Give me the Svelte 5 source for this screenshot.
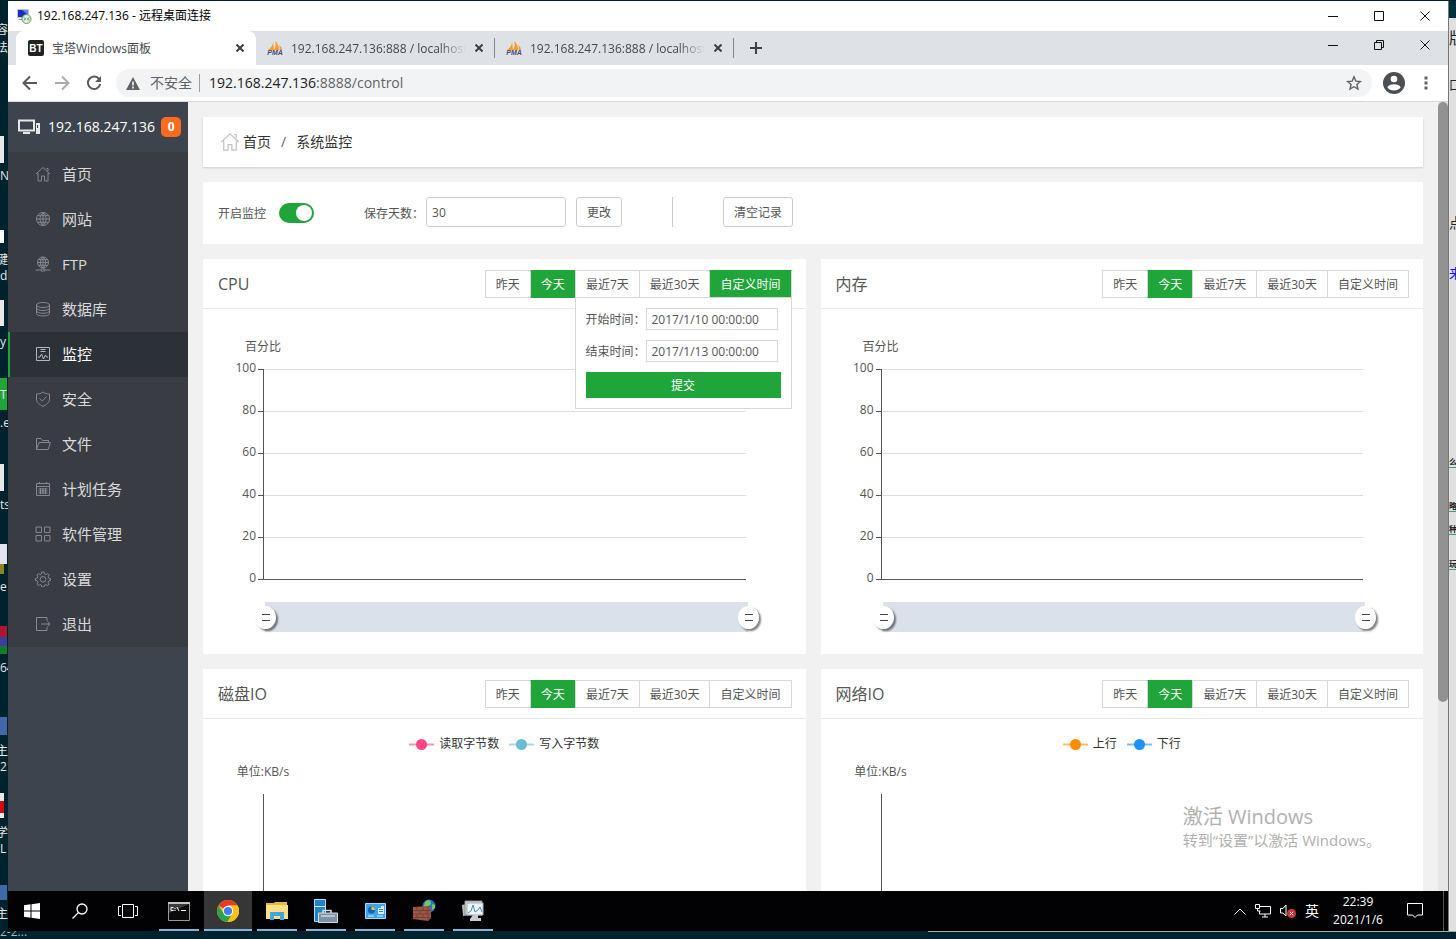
<script>
  const menu = [
    { name: '首页', icon: 'M1 8 8 1.500 15 8M3 7v8h3.500V10h3v5H13V7M11.500 2.500H13V5' },
    {
      name: '网站',
      icon: 'M8 1.500a6.500 6.500 0 1 0 0 13a6.500 6.500 0 1 0 0-13M8 1.500v13M1.500 8h13M8 1.500c-4 3.500-4 9.500 0 13M8 1.500c4 3.500 4 9.500 0 13M2.500 4.700h11M2.500 11.300h11',
    },
    {
      name: 'FTP',
      icon: 'M8 1a5.500 5.500 0 1 0 0 11a5.500 5.500 0 1 0 0-11M8 1v11M2.500 6.500h11M8 1c-3.500 3-3.500 8 0 11M8 1c3.500 3 3.500 8 0 11M3.500 3.700h9M3.500 9.300h9M.5 14h5M10.500 14h5M6 13h4v2H6z',
    },
    {
      name: '数据库',
      icon: 'M1.500 4c0-3.300 13-3.300 13 0s-13 3.300-13 0v8.500c0 3.300 13 3.300 13 0V4M1.500 7c0 3.300 13 3.300 13 0M1.500 9.800c0 3.300 13 3.300 13 0',
    },
    { name: '监控', icon: 'M1.500 1.500h13v13h-13zM3 11h2l1.500-3 2 5 2-4 1 2H13M5.500 3.500h5M5.500 5.500h5' },
    { name: '安全', icon: 'M8 1c2 1.500 4 2 6.500 2v5c0 3.500-3 5.800-6.500 7.300C4.500 13.800 1.500 11.500 1.500 8V3C4 3 6 2.500 8 1M4.800 7.500l2.500 2.700 4.200-4.700' },
    { name: '文件', icon: 'M1.500 13.500v-11h4.500l1.500 2h6v2M1.500 13.500l2.500-7h11.300l-2 7z' },
    {
      name: '计划任务',
      icon: 'M1.500 2.500h13v12h-13zM1.500 5.500h13M4.500 1V3M11.500 1V3M3.500 8h9M3.500 10h9M3.500 12h9M5.500 7v6M8 7v6M10.500 7v6',
    },
    { name: '软件管理', icon: 'M1 1h5.500v5.500H1zM9.500 1H15v5.500H9.500zM1 9.500h5.500V15H1zM9.500 9.500H15V15H9.500z' },
    {
      name: '设置',
      icon: 'M6.800 1h2.400l.4 2 1.300.6L12.600 2.500l1.500 1.600-1 1.700.5 1.300 1.900.4v2l-1.900.5-.5 1.300 1 1.700-1.500 1.600-1.700-1.100-1.300.6-.4 2H6.800l-.4-2-1.300-.6-1.700 1.100L1.900 13l1-1.700L2.400 10l-1.900-.5v-2l1.900-.4.5-1.300-1-1.700 1.500-1.600 1.700 1.100L6.400 3zM8 5.500a2.800 2.800 0 1 0 0 5.600a2.800 2.800 0 1 0 0-5.600',
    },
    { name: '退出', icon: 'M12 5V1.500H1.500v13H12V11M6 8h9M12.500 5.500 15 8l-2.500 2.500' },
  ];

  const ranges = ['昨天', '今天', '最近7天', '最近30天', '自定义时间'];
  const ticks = [100, 80, 60, 40, 20, 0];

  const panels = [
    { title: 'CPU', unit: '百分比', legend: [] },
    { title: '内存', unit: '百分比', legend: [] },
    {
      title: '磁盘IO',
      unit: '单位:KB/s',
      legend: [
        { name: '读取字节数', color: '#ff4683' },
        { name: '写入字节数', color: '#6abcd0' },
      ],
    },
    {
      title: '网络IO',
      unit: '单位:KB/s',
      legend: [
        { name: '上行', color: '#ff8c00' },
        { name: '下行', color: '#1e90ff' },
      ],
    },
  ];

  // Labels on the desktop behind the window, by their top edge.
  const desktopLeft = [
    { top: 20, text: '容' },
    { top: 38, text: '法' },
    { top: 166, text: 'N', latin: true },
    { top: 250, text: '键' },
    { top: 266, text: 'dp', latin: true },
    { top: 332, text: 'y', latin: true },
    { top: 385, text: 'T', latin: true },
    { top: 413, text: '.e', latin: true },
    { top: 495, text: 'ts', latin: true },
    { top: 577, text: 'e', latin: true },
    { top: 658, text: '64', latin: true },
    { top: 741, text: '主' },
    { top: 757, text: '2', latin: true },
    { top: 823, text: '学' },
    { top: 839, text: 'L', latin: true },
    { top: 904, text: '主' },
  ];
  const desktopFiles = [
    { top: 135, height: 27, color: '#e8e8e8' },
    { top: 229, height: 13, color: '#ffffff' },
    { top: 299, height: 26, color: '#e8e8e8' },
    { top: 377, height: 32, color: '#1fa53a', wide: true },
    { top: 463, height: 27, color: '#e8e8e8' },
    { top: 543, height: 20, color: '#e4e4ee', wide: true },
    { top: 563, height: 10, color: '#8d8420' },
    { top: 625, height: 11, color: '#b01432', wide: true },
    { top: 636, height: 9, color: '#3a3f9c', wide: true },
    { top: 645, height: 8, color: '#157a2c', wide: true },
    { top: 716, height: 18, color: '#4169a8', wide: true },
    { top: 792, height: 8, color: '#e8e8e8' },
    { top: 800, height: 12, color: '#d20a18' },
    { top: 812, height: 5, color: '#e8e8e8' },
    { top: 884, height: 15, color: '#4169a8', wide: true },
  ];
  const desktopRight = [
    { top: 28, text: '版', size: 16 },
    { top: 76, text: '口', size: 12 },
    { top: 213, text: '点', size: 14 },
    { top: 263, text: '来', size: 13, color: '#1414e0' },
    { top: 456, text: '么', size: 8, link: true },
    { top: 500, text: '略', size: 8, link: true },
    { top: 523, text: '种', size: 8, link: true },
    { top: 558, text: '玩', size: 8, link: true },
  ];

  let current = $state('监控');
  let selected = $state(panels.map(() => '今天'));
  let customOpen = $state(0);
  let monitoring = $state(true);
  let days = $state('30');
  let startTime = $state('2017/1/10 00:00:00');
  let endTime = $state('2017/1/13 00:00:00');

  function choose(index, range) {
    if (range === '自定义时间') {
      customOpen = customOpen === index ? -1 : index;
      return;
    }
    selected[index] = range;
  }
</script>

{#snippet windowButtons(restore)}
  <div class="window-buttons">
    <button type="button" aria-label="最小化">
      <svg width="11" height="11"><path d="M0 5.500h10" /></svg>
    </button>
    <button type="button" aria-label="最大化">
      <svg width="11" height="11">
        {#if restore}
          <path d="M.5 2.500h7v7h-7zM2.500 2.500v-2h7v7h-2" />
        {:else}
          <path d="M.5.5h9v9h-9z" />
        {/if}
      </svg>
    </button>
    <button type="button" aria-label="关闭">
      <svg width="11" height="11"><path d="M.5.5l9 9M9.500.5l-9 9" /></svg>
    </button>
  </div>
{/snippet}

{#snippet closeTab()}
  <button class="tab__close" type="button" aria-label="关闭标签页">
    <svg width="8" height="8" viewBox="0 0 8 8"><path d="M.5.5l7 7M7.500.5l-7 7" /></svg>
  </button>
{/snippet}

<div class="desktop">
  <div class="strip strip--left">
    {#each desktopFiles as file}
      <i
        class:is-wide={file.wide}
        style:top={`${file.top}px`}
        style:height={`${file.height}px`}
        style:background={file.color}></i>
    {/each}
    {#each desktopLeft as label}
      <span class:is-latin={label.latin} style:top={`${label.top}px`}>{label.text}</span>
    {/each}
  </div>

  <div class="window">
    <header class="titlebar">
      <svg class="titlebar__icon" width="16" height="16" viewBox="0 0 16 16">
        <path d="M1 1h12v9H1z" fill="#c3c8cc" />
        <path d="M2 2h10v7H2z" fill="#1730c4" />
        <path d="M6 2h6v5z" fill="#5d83e8" />
        <path d="M3 11h6v1H2z" fill="#8d9599" />
        <circle cx="10.500" cy="11" r="4.500" fill="#e4eee0" stroke="#6e9a62" />
        <path d="M8 9.500 9.500 11 8 12.500M13 9.500 11.500 11l1.500 1.500" fill="none" stroke="#287a28" />
      </svg>
      <span>192.168.247.136 - 远程桌面连接</span>
      {@render windowButtons(false)}
    </header>

    <div class="tabs">
      <div class="tab tab--active">
        <svg width="16" height="16" viewBox="0 0 16 16">
          <rect width="16" height="16" rx="2" fill="#222" />
          <text x="8" y="12" text-anchor="middle" class="bt">BT</text>
        </svg>
        <span class="tab__title">宝塔Windows面板</span>
        {@render closeTab()}
      </div>
      {#each [1, 2] as tab (tab)}
        <div class="tab">
          <svg width="16" height="16" viewBox="0 0 16 16">
            <path d="M1 10C4 8 6 5 6 2l1 8zM7 10c2-3 2-6 1-9 3 2 4 6 4 9zM12.500 10c.5-2 0-4-.5-5 2 1 3 3 3 5z" fill="#f59a2d" />
            <text x="8" y="15" text-anchor="middle" class="pma">PMA</text>
          </svg>
          <span class="tab__title tab__title--fade">192.168.247.136:888 / localhost</span>
          {@render closeTab()}
        </div>
      {/each}
      <button class="tabs__new" type="button" aria-label="新标签页">
        <svg width="12" height="12"><path d="M6 0v12M0 6h12" /></svg>
      </button>
      {@render windowButtons(true)}
    </div>

    <div class="toolbar">
      <button type="button" aria-label="后退">
        <svg width="16" height="16" viewBox="0 0 16 16"><path d="M15 8H2M8 1.500 1.500 8 8 14.500" /></svg>
      </button>
      <button class="is-disabled" type="button" aria-label="前进">
        <svg width="16" height="16" viewBox="0 0 16 16"><path d="M1 8h13M8 1.500 14.500 8 8 14.500" /></svg>
      </button>
      <button type="button" aria-label="重新加载">
        <svg width="16" height="16" viewBox="0 0 16 16">
          <path d="M13.200 4.200A6.200 6.200 0 1 0 14.200 9" />
          <path d="M15 1v6H9z" fill="#555a5f" stroke="none" />
        </svg>
      </button>
      <div class="omnibox">
        <svg width="14" height="13" viewBox="0 0 14 13">
          <path d="M7 0l7 13H0z" fill="#5f6368" />
          <path d="M7 4.500v4M7 9.500v2" stroke="#fff" stroke-width="1.500" />
        </svg>
        <span class="omnibox__state">不安全</span>
        <span class="omnibox__url"><b>192.168.247.136</b>:8888/control</span>
        <svg width="16" height="16" viewBox="0 0 16 16">
          <path d="M8 1.800l1.800 4.300 4.600.4-3.500 3 1.100 4.600L8 11.700l-4 2.400 1.100-4.600-3.500-3 4.600-.4z" fill="none" stroke="#5f6368" stroke-width="1.400" />
        </svg>
      </div>
      <button class="avatar" type="button" aria-label="用户">
        <svg width="22" height="22" viewBox="0 0 22 22">
          <circle cx="11" cy="11" r="11" fill="#4c4f53" />
          <circle cx="11" cy="7" r="3.300" fill="#fff" />
          <path d="M4.300 15.300c1.500-4 11.900-4 13.400 0-3 4.400-10.400 4.400-13.400 0" fill="#fff" />
        </svg>
      </button>
      <button type="button" aria-label="菜单">
        <svg width="4" height="14" viewBox="0 0 4 14">
          <path d="M.5.5h3v3h-3zM.5 5.500h3v3h-3zM.5 10.500h3v3h-3z" fill="#5f6368" stroke="none" />
        </svg>
      </button>
    </div>

    <div class="page">
      <nav class="sidebar">
        <div class="sidebar__host">
          <svg width="24" height="18" viewBox="0 0 24 18">
            <path d="M2 2.500h15v10H2z" fill="none" stroke="#e8e8e8" stroke-width="2" />
            <path d="M6 14h7v2H6zM19 5h4v11h-4z" fill="#e8e8e8" />
            <path d="M20.500 7v3" stroke="#3d444d" />
          </svg>
          <span>192.168.247.136</span>
          <em>0</em>
        </div>
        {#each menu as item (item.name)}
          <a
            href={`#${item.name}`}
            class:is-active={current === item.name}
            onclick={() => (current = item.name)}>
            <svg width="16" height="16" viewBox="0 0 16 16"><path d={item.icon} /></svg>
            {item.name}
          </a>
        {/each}
      </nav>

      <main>
        <div class="card breadcrumb">
          <svg width="20" height="20" viewBox="0 0 16 16">
            <path d="M1 8 8 1.500 15 8M3 7v7.500h3.500V10h3v4.500H13V7M11.500 2H13v3" />
          </svg>
          <a href="#home">首页</a>
          <span class="breadcrumb__slash">/</span>
          <span>系统监控</span>
        </div>

        <div class="card settings">
          <label for="monitor">开启监控</label>
          <input id="monitor" class="switch" type="checkbox" bind:checked={monitoring} />
          <label class="settings__days" for="days">保存天数：</label>
          <input id="days" class="settings__input" type="text" bind:value={days} />
          <button type="button">更改</button>
          <span class="settings__divider"></span>
          <button type="button">清空记录</button>
        </div>

        <div class="panels">
          {#each panels as panel, index (panel.title)}
            <section class="card panel">
              <div class="panel__header">
                <h2>{panel.title}</h2>
                <div class="ranges">
                  {#each ranges as range}
                    <button
                      type="button"
                      class:is-on={selected[index] === range || (range === '自定义时间' && customOpen === index)}
                      onclick={() => choose(index, range)}>
                      {range}
                    </button>
                  {/each}
                  {#if customOpen === index}
                    <div class="custom">
                      <div class="custom__row">
                        <label for="start">开始时间：</label>
                        <input id="start" type="text" bind:value={startTime} />
                      </div>
                      <div class="custom__row">
                        <label for="end">结束时间：</label>
                        <input id="end" type="text" bind:value={endTime} />
                      </div>
                      <button type="button" onclick={() => (customOpen = -1)}>提交</button>
                    </div>
                  {/if}
                </div>
              </div>

              {#if panel.legend.length}
                <div class="legend">
                  {#each panel.legend as series}
                    <span class="legend__item">
                      <svg width="25" height="14" style:color={series.color}>
                        <path d="M0 7.500h25" stroke="currentColor" stroke-width="2" opacity="0.6" />
                        <circle cx="12.500" cy="7.500" r="5.500" fill="currentColor" />
                      </svg>
                      {series.name}
                    </span>
                  {/each}
                </div>
                <div class="unit">{panel.unit}</div>
                <div class="empty-axis"></div>
              {:else}
                <div class="unit unit--top">{panel.unit}</div>
                <div class="chart">
                  {#each ticks as tick}
                    <div class="chart__row" class:chart__row--zero={tick === 0}>
                      <span>{tick}</span>
                      <i></i>
                    </div>
                  {/each}
                </div>
                <div class="zoom">
                  <input type="range" min="0" max="100" value="0" aria-label="起点" />
                  <input type="range" min="0" max="100" value="100" aria-label="终点" />
                </div>
              {/if}
            </section>
          {/each}
        </div>
      </main>

      <div class="scrollbar"><div></div></div>

      <div class="watermark">
        <p>激活 Windows</p>
        <small>转到“设置”以激活 Windows。</small>
      </div>
    </div>

    <footer class="taskbar">
      <button type="button" aria-label="开始">
        <svg width="16" height="16" viewBox="0 0 16 16">
          <path d="M0 2.300 6.500 1.300V7.500H0zM7.500 1.200 16 0v7.500H7.500zM0 8.500h6.500v6.200L0 13.700zM7.500 8.500H16V16l-8.500-1.200z" fill="#fff" />
        </svg>
      </button>
      <button type="button" aria-label="搜索">
        <svg width="16" height="16" viewBox="0 0 16 16" fill="none" stroke="#fff" stroke-width="1.300">
          <circle cx="10" cy="6" r="5" /><path d="M6.500 9.500.5 15.500" />
        </svg>
      </button>
      <button type="button" aria-label="任务视图">
        <svg width="20" height="14" viewBox="0 0 20 14" fill="none" stroke="#fff">
          <path d="M4.500.5h11v13h-11zM3 2.500H.5v9H3M17 2.500h2.500v9H17" />
        </svg>
      </button>
      <div class="taskbar__apps">
        <button type="button" aria-label="命令提示符">
          <svg width="22" height="19" viewBox="0 0 22 19">
            <path d="M.5.5h21v18H.5z" fill="#0a0a0a" stroke="#999" />
            <path d="M0 0h22v2H0z" fill="#c4c4c4" />
            <path d="M1 2h20L1 11z" fill="#3c3c3c" />
            <path d="M5.500 5.500H3v3h2.500M7 6v1M7 8v1M9 5l2 4M13 8.500h5" fill="none" stroke="#fff" />
          </svg>
        </button>
        <button class="is-current" type="button" aria-label="Chrome">
          <svg width="22" height="22" viewBox="0 0 22 22">
            <circle cx="11" cy="11" r="11" fill="#fbc116" />
            <path d="M11 11 1.500 5.500A11 11 0 0 1 20.500 5.500H11z" fill="#e33b2e" />
            <path d="M1.500 5.500A11 11 0 0 0 10.500 22l5-8.500L11 11l-4.500 2.500z" fill="#2ba24c" />
            <path d="M11 5.500h9.500A11 11 0 0 1 10.500 22l5-8.500z" fill="#fbc116" />
            <circle cx="11" cy="11" r="5.200" fill="#fff" />
            <circle cx="11" cy="11" r="4.100" fill="#3f7fec" />
          </svg>
        </button>
        <button type="button" aria-label="文件资源管理器">
          <svg width="22" height="18" viewBox="0 0 22 18">
            <path d="M0 1h8l1-1h12v4H0z" fill="#e8b844" />
            <path d="M0 3h22v14H0z" fill="#fbdf86" />
            <path d="M4 18v-8h14v8h-4v-4H8v4z" fill="#3fa7dc" />
          </svg>
        </button>
        <button type="button" aria-label="服务器管理器">
          <svg width="24" height="24" viewBox="0 0 24 24">
            <path d="M.5.5h11v22H.5z" fill="#2183c4" stroke="#b8dcf2" />
            <path d="M1 7.500h10" stroke="#d8ecf8" />
            <path d="M9 14v-2.500h8V14" fill="none" stroke="#d0d8df" stroke-width="1.500" />
            <path d="M4.500 14h19v9.500h-19z" fill="#7e93a6" stroke="#d5dee6" />
            <path d="M7 17h14" stroke="#f2f5f7" />
          </svg>
        </button>
        <button type="button" aria-label="控制面板">
          <svg width="21" height="16" viewBox="0 0 21 16">
            <path d="M.5.5h20v15H.5z" fill="#3ca4e8" stroke="#a7d9f8" />
            <circle cx="6.500" cy="7" r="3.500" fill="#1664ad" />
            <path d="M6.500 7V3.500A3.500 3.500 0 0 1 10 7z" fill="#f4bd42" />
            <path d="M13 5h3V3h3v8h-6z" fill="#d9edfb" />
            <path d="M14 6.500h4M14 8.500h4" stroke="#3186c7" />
            <path d="M3 13h6M12 13h6" stroke="#d9effc" />
          </svg>
        </button>
        <button type="button" aria-label="防火墙">
          <svg width="24" height="24" viewBox="0 0 24 24">
            <circle cx="17" cy="7" r="6.500" fill="#2377c8" />
            <path d="M13 3c3-3 6-2 6 1s-4 2-3 5-3 2-4-2zM20 5l3 1v3l-3 2z" fill="#72c95e" />
            <path d="M1 8l15-1 3 2v10l-3 3-15-2z" fill="#9b5848" />
            <path d="M1 11.500h18M1 15h18M1 18.500h18M5 8v3.500M11 8v3.500M8 11.500V15M14 11.500V15M5 15v3.500M11 15v3.500M16 7v15" stroke="#7a3f33" fill="none" />
          </svg>
        </button>
        <button type="button" aria-label="资源监视器">
          <svg width="24" height="22" viewBox="0 0 24 22">
            <path d="M1 5l13-3v12L2 16z" fill="#b8bcc0" />
            <path d="M4 1h17v14H4z" fill="#d9dcdf" stroke="#8c9195" />
            <path d="M6 3h16v12H6z" fill="#eef4fa" stroke="#a7adb2" />
            <path d="M7 13l3-2 2-6 2 7 3-2 2-3 2 5" fill="none" stroke="#4a8cc6" />
            <path d="M12 15h5v3h3v3H9v-2z" fill="#c8ccd0" />
          </svg>
        </button>
      </div>
      <div class="tray">
        <svg width="12" height="7" viewBox="0 0 12 7"><path d="M.5 6.500 6 1l5.500 5.500" /></svg>
        <svg width="16" height="14" viewBox="0 0 16 14"><path d="M5 2.500h10.500v7.500H4.500V7M.5.5h4v4h-4zM2.500 4.500V7h3M7 13h6M10 10v3" /></svg>
        <svg width="16" height="14" viewBox="0 0 16 14">
          <path d="M.5 4.500H3L6 1v11L3 9H.5z" />
          <circle cx="11.500" cy="9.500" r="4.500" fill="#d13438" stroke="none" />
          <path d="M9.800 7.800l3.400 3.400M13.200 7.800l-3.400 3.400" />
        </svg>
        <span class="tray__lang">英</span>
        <time>22:39<br />2021/1/6</time>
        <svg class="tray__note" width="16" height="16" viewBox="0 0 16 16"><path d="M.5.5h15v11.500h-5L8 14.500 5.500 12h-5z" /></svg>
      </div>
    </footer>
  </div>

  <div class="strip strip--right">
    {#each desktopRight as label}
      <span
        class:is-link={label.link}
        style:top={`${label.top}px`}
        style:font-size={`${label.size}px`}
        style:color={label.color}>{label.text}</span>
    {/each}
  </div>

  <div class="desktop__bottom"><span>2-2...</span></div>
</div>

<style>
  :global(body) {
    margin: 0;
  }

  .desktop {
    box-sizing: border-box;
    height: 100vh;
    padding-top: 1px;
    display: grid;
    grid-template-columns: 8px minmax(0, 1fr) 8px;
    grid-template-rows: minmax(0, 1fr) 8px;
    background: #00222c;
    color: #333;
    font-family: 'Open Sans', 'Noto Sans CJK SC', sans-serif;
    font-size: 12px;
    line-height: 18px;
    overflow: hidden;
  }

  .desktop *,
  .desktop *::before {
    box-sizing: border-box;
  }

  button,
  input {
    font: inherit;
    color: inherit;
    margin: 0;
  }

  button {
    border: 0;
    padding: 0;
    background: none;
    cursor: pointer;
  }

  a {
    color: inherit;
    text-decoration: none;
  }

  svg {
    flex: none;
    display: block;
  }

  .strip {
    position: relative;
    overflow: hidden;
    color: #e6e6e6;
  }

  .strip span,
  .strip i {
    position: absolute;
    white-space: nowrap;
  }

  .strip--left span {
    right: 0;
  }

  .strip--left .is-latin {
    left: 0;
    right: auto;
  }

  .strip--left i {
    left: 0;
    width: 4px;
  }

  .strip--left .is-wide {
    width: 7px;
  }

  .strip--right {
    background: linear-gradient(#00303a 17px, #e0e0e0 17px);
    color: #222;
    border-left: 1px solid #777;
  }

  .strip--right span {
    left: 0;
  }

  .strip--right .is-link {
    font-weight: bold;
    border-bottom: 1px solid #3b9c8c;
    line-height: 10px;
  }

  .desktop__bottom {
    grid-column: 1 / -1;
    height: 8px;
    overflow: hidden;
    color: #aab4b8;
    line-height: 1px;
    background: linear-gradient(#aaa, #aaa) 928px 0 / 100% 1px no-repeat;
  }

  .window {
    display: flex;
    flex-direction: column;
    min-width: 0;
    background: #fff;
  }

  .titlebar {
    display: flex;
    align-items: center;
    flex: none;
    height: 30px;
    padding-left: 8px;
    gap: 5px;
    color: #000;
  }

  .window-buttons {
    display: flex;
    margin-left: auto;
  }

  .window-buttons button {
    width: 46px;
    height: 28px;
    display: grid;
    place-items: center;
  }

  .window-buttons svg {
    fill: none;
    stroke: #111;
  }

  .tabs {
    display: flex;
    flex: none;
    height: 34px;
    padding-left: 8px;
    background: #dee1e6;
  }

  .tab {
    display: flex;
    align-items: center;
    width: 239px;
    padding: 0 11px;
    gap: 8px;
    color: #45494d;
    position: relative;
  }

  .tab:not(.tab--active)::after {
    content: '';
    position: absolute;
    right: 0;
    top: 7px;
    height: 20px;
    border-right: 1px solid #85888d;
  }

  .tab--active {
    width: 240px;
    padding-left: 12px;
    background: #fff;
    border-radius: 8px 8px 0 0;
  }

  .tab__title {
    flex: 1;
    overflow: hidden;
    white-space: nowrap;
    padding-top: 1px;
  }

  .tab__title--fade {
    mask-image: linear-gradient(90deg, #000 85%, transparent);
  }

  .tab__close {
    width: 10px;
    height: 16px;
    display: grid;
    place-items: center;
  }

  .tab__close svg,
  .tabs__new svg {
    fill: none;
    stroke: #3c4043;
    stroke-width: 2;
  }

  .tabs__new {
    width: 44px;
    display: grid;
    place-items: center;
  }

  .bt {
    font: bold 10px 'Liberation Sans', sans-serif;
    fill: #fff;
  }

  .pma {
    font: italic bold 7px 'Liberation Sans', sans-serif;
    fill: #4a4a78;
  }

  .toolbar {
    display: flex;
    align-items: center;
    flex: none;
    height: 37px;
    padding: 0 6px;
    border-bottom: 1px solid #d5d7da;
  }

  .toolbar button {
    width: 32px;
    height: 28px;
    display: grid;
    place-items: center;
  }

  .toolbar button svg {
    fill: none;
    stroke: #555a5f;
    stroke-width: 2;
  }

  .toolbar .is-disabled {
    opacity: 0.5;
  }

  .toolbar .avatar svg {
    stroke: none;
  }

  .toolbar .avatar {
    margin-left: 6px;
  }

  .omnibox {
    display: flex;
    align-items: center;
    flex: 1;
    height: 28px;
    margin-left: 6px;
    padding: 0 10px;
    border-radius: 14px;
    background: #f1f3f4;
    color: #5f6368;
    font-size: 14px;
  }

  .omnibox__state {
    margin-left: 10px;
    padding-right: 7px;
    border-right: 1px solid #9b9ea2;
  }

  .omnibox__url {
    flex: 1;
    margin-left: 9px;
  }

  .omnibox__url b {
    font-weight: normal;
    color: #202124;
  }

  .page {
    display: flex;
    flex: 1;
    min-height: 0;
    position: relative;
    background: #f1f1f1;
    overflow: hidden;
  }

  .sidebar {
    flex: none;
    width: 180px;
    background: #3d444d;
    color: #d8d9db;
  }

  .sidebar__host {
    display: flex;
    align-items: center;
    height: 50px;
    padding-left: 9px;
    font-size: 14px;
    color: #fff;
  }

  .sidebar__host span {
    margin: 0 6px 0 7px;
  }

  .sidebar__host em {
    width: 20px;
    height: 20px;
    border-radius: 5px;
    background: #ff6a1f;
    font-size: 12px;
    font-style: normal;
    font-weight: bold;
    line-height: 20px;
    text-align: center;
  }

  .sidebar a {
    display: flex;
    align-items: center;
    gap: 11px;
    height: 45px;
    padding: 0 0 2px 25px;
    border-left: 2px solid #393d43;
    background: #393d43;
    font-size: 15px;
  }

  .sidebar a svg {
    fill: none;
    stroke: #85888c;
  }

  .sidebar .is-active {
    border-left-color: #20a53a;
    background: #2c3138;
    color: #fff;
  }

  .sidebar .is-active svg {
    stroke: #b4b6b9;
  }

  main {
    flex: 1;
    min-width: 0;
    padding: 15px;
    display: flex;
    flex-direction: column;
    gap: 15px;
  }

  .card {
    background: #fff;
  }

  .breadcrumb {
    display: flex;
    align-items: center;
    flex: none;
    height: 50px;
    padding-left: 17px;
    gap: 3px;
    box-shadow: 0 1px 2px rgba(0, 0, 0, 0.15);
    font-size: 14px;
  }

  .breadcrumb svg {
    fill: none;
    stroke: #c4c4c4;
  }

  .breadcrumb__slash {
    margin: 0 7px;
    color: #666;
  }

  .settings {
    display: flex;
    align-items: center;
    flex: none;
    height: 62px;
    padding-left: 15px;
    color: #555;
  }

  .settings label {
    padding-top: 2px;
  }

  .settings button,
  .settings__input,
  .settings__divider {
    height: 30px;
    margin-bottom: 2px;
  }

  .settings button,
  .settings__input {
    border: 1px solid #ccc;
    border-radius: 3px;
    background: #fff;
  }

  .settings button {
    margin-left: 10px;
    padding: 1px 10px 0;
  }

  .settings__input {
    width: 140px;
    margin-left: 2px;
    padding: 0 5px;
  }

  .settings__days {
    margin-left: 50px;
  }

  .settings__divider {
    margin-left: 50px;
    margin-right: 40px;
    border-left: 1px solid #ccc;
  }

  .switch {
    appearance: none;
    width: 35px;
    height: 20px;
    margin-left: 13px;
    padding: 2px;
    border-radius: 10px;
    background: #ccc;
    cursor: pointer;
  }

  .switch::before {
    content: '';
    display: block;
    width: 16px;
    height: 16px;
    border-radius: 8px;
    background: #fff;
  }

  .switch:checked {
    background: #20a53a;
  }

  .switch:checked::before {
    margin-left: 15px;
  }

  .panels {
    display: grid;
    grid-template-columns: repeat(2, minmax(0, 1fr));
    gap: 15px;
  }

  .panel {
    min-height: 395px;
    color: #555;
  }

  .panel__header {
    display: flex;
    align-items: center;
    justify-content: space-between;
    height: 50px;
    padding: 0 14px 0 15px;
    border-bottom: 1px solid #e8e8e8;
  }

  h2 {
    margin: 0;
    font-size: 16px;
    font-weight: normal;
  }

  .ranges {
    display: flex;
    position: relative;
  }

  .ranges > button {
    height: 28px;
    padding: 2px 10px 0;
    border: 1px solid #d8d8d8;
    background: #fff;
  }

  .ranges > button + button {
    margin-left: -1px;
  }

  .ranges > .is-on {
    border-color: #20a53a #d8d8d8;
    background: #20a53a;
    color: #fff;
  }

  .custom {
    position: absolute;
    z-index: 1;
    top: 27px;
    right: 0;
    width: 217px;
    padding: 10px;
    border: 1px solid #d8d8d8;
    background: #fff;
    display: grid;
    gap: 10px;
  }

  .custom__row {
    display: flex;
    align-items: center;
  }

  .custom__row label {
    width: 60px;
    padding-top: 2px;
  }

  .custom__row input {
    width: 132px;
    height: 22px;
    padding: 2px 5px 0;
    border: 1px solid #d8d8d8;
  }

  .custom > button {
    height: 26px;
    padding-top: 2px;
    background: #20a53a;
    color: #fff;
  }

  .unit {
    width: 120px;
    height: 18px;
    text-align: center;
  }

  .unit--top {
    margin-top: 29px;
  }

  .chart {
    position: relative;
    margin: 13px 60px 22px 0;
  }

  .chart::before {
    content: '';
    position: absolute;
    left: 60px;
    top: 0;
    bottom: 0;
    border-left: 1px solid #555;
  }

  .chart__row {
    display: grid;
    grid-template-columns: 53px 1fr;
    gap: 2px;
    height: 42px;
  }

  .chart__row span {
    margin-top: -10px;
    text-align: right;
  }

  .chart__row i {
    height: 1px;
    background: linear-gradient(90deg, #555 5px, #ddd 5px);
  }

  .chart__row--zero {
    height: 1px;
  }

  .chart__row--zero i {
    background: #555;
  }

  .zoom {
    position: relative;
    height: 30px;
    margin: 0 58px 0 62px;
    background: #dbe1ea;
  }

  .zoom input {
    appearance: none;
    position: absolute;
    inset: 3px -11px auto -10px;
    height: 24px;
    background: none;
    pointer-events: none;
  }

  .zoom input::-webkit-slider-thumb {
    appearance: none;
    width: 21px;
    height: 23px;
    border-radius: 50%;
    background:
      linear-gradient(#444, #444) 7px 8px / 8px 1px no-repeat,
      linear-gradient(#444, #444) 7px 14px / 8px 1px no-repeat,
      #fff;
    box-shadow: 2px 2px 2px rgba(0, 0, 0, 0.5);
    pointer-events: auto;
  }

  .legend {
    display: flex;
    justify-content: center;
    gap: 10px;
    height: 18px;
    margin: 16px 0 10px;
    color: #333;
  }

  .legend__item {
    display: flex;
    align-items: center;
    gap: 5px;
  }

  .empty-axis {
    height: 240px;
    margin: 13px 0 0 60px;
    border-left: 1px solid #555;
  }

  .scrollbar {
    flex: none;
    width: 10px;
    background: #e6e6e6;
  }

  .scrollbar div {
    height: 76%;
    border-radius: 5px;
    background: #929292;
  }

  .watermark {
    position: absolute;
    right: 67px;
    bottom: 41px;
    color: #b0b0b0;
    pointer-events: none;
  }

  .watermark p {
    margin: 0;
    font-size: 20px;
    line-height: 26px;
  }

  .watermark small {
    font-size: 15px;
    line-height: 20px;
    display: block;
  }

  .taskbar {
    display: flex;
    flex: none;
    height: 40px;
    background: #020205;
    color: #fff;
  }

  .taskbar button {
    width: 48px;
    display: grid;
    place-items: center;
    position: relative;
  }

  .taskbar__apps {
    display: flex;
    gap: 1px;
    margin-left: 3px;
  }

  .taskbar__apps button::after {
    content: '';
    position: absolute;
    left: 4px;
    right: 4px;
    bottom: 0;
    height: 2px;
    background: #80b4dc;
  }

  .taskbar__apps .is-current {
    background: #363636;
  }

  .taskbar__apps .is-current::after {
    left: 0;
    right: 0;
  }

  .tray {
    display: flex;
    align-items: center;
    gap: 9px;
    margin-left: auto;
    margin-right: 4px;
    padding-right: 20px;
    border-right: 1px solid #55555a;
  }

  .tray svg {
    fill: none;
    stroke: #fff;
  }

  .tray__lang {
    font-size: 14px;
  }

  .tray time {
    width: 60px;
    text-align: center;
  }

  .tray__note {
    margin-left: 10px;
  }
</style>
